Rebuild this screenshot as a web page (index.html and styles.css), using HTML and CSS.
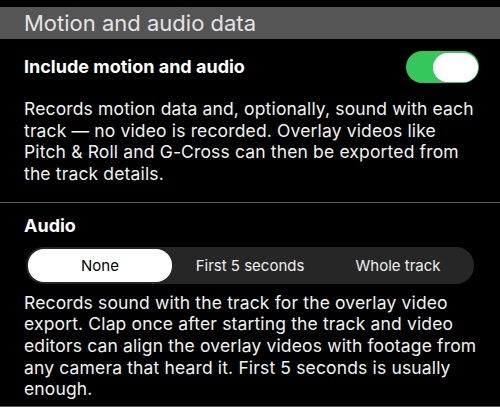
FILE: index.html
```html
<!DOCTYPE html>
<html lang="en">
<head>
<meta charset="utf-8">
<link rel="stylesheet" href="styles.css">
</head>
<body>
<div class="screen">
  <div class="section-header">Motion and audio data</div>
  <div class="group">
    <div class="row">
      <span class="row-title">Include motion and audio</span>
      <span class="toggle"><span class="knob"></span></span>
    </div>
    <p class="desc">Records motion data and, optionally, sound with each<br>track — no video is recorded. Overlay videos like<br>Pitch &amp; Roll and G-Cross can then be exported from<br>the track details.</p>
  </div>
  <div class="group audio">
    <div class="row-title">Audio</div>
    <div class="segmented">
      <span class="seg selected">None</span>
      <span class="seg">First 5 seconds</span>
      <span class="seg">Whole track</span>
    </div>
    <p class="desc">Records sound with the track for the overlay video<br>export. Clap once after starting the track and video<br>editors can align the overlay videos with footage from<br>any camera that heard it. First 5 seconds is usually<br>enough.</p>
  </div>
</div>
</body>
</html>
```
FILE: styles.css
```css
html, body {
  margin: 0;
  padding: 0;
  background: #000;
}
body {
  font-family: Inter, "Noto Sans", sans-serif;
  color: #fff;
  width: 500px;
  height: 407px;
  overflow: hidden;
}
.screen {
  padding-top: 7px;
}
.section-header {
  height: 32px;
  line-height: 32px;
  background: #555555;
  color: #e4e4e4;
  font-size: 22px;
  padding-left: 24px;
  box-sizing: border-box;
}
.group {
  border-bottom: 1px solid #5a5a5a;
}
.row {
  display: flex;
  align-items: center;
  justify-content: space-between;
  padding: 12px 21px 0 24px;
}
.row-title {
  font-size: 18px;
  font-weight: 700;
  line-height: 22px;
}
.toggle {
  width: 73px;
  height: 32px;
  border-radius: 16px;
  background: #34c759;
  display: flex;
  align-items: center;
  justify-content: flex-end;
  padding-right: 1px;
  box-sizing: border-box;
}
.knob {
  width: 45px;
  height: 29px;
  border-radius: 15px;
  background: #fff;
}
.desc {
  margin: 0;
  font-size: 17.5px;
  line-height: 21.6px;
  letter-spacing: 0.15px;
  padding: 15px 14px 18px 24px;
  color: #f2f2f2;
}
.audio {
  padding-top: 12px;
}
.audio > .row-title {
  padding-left: 24px;
}
.audio .desc {
  padding-top: 7.5px;
  padding-bottom: 6.5px;
}
.segmented {
  margin: 10px 26px 0 26px;
  height: 37px;
  background: #262626;
  border-radius: 18px;
  padding: 2px;
  box-sizing: border-box;
  display: grid;
  grid-template-columns: 1fr 1fr 1fr;
}
.seg {
  display: flex;
  align-items: center;
  justify-content: center;
  font-size: 15px;
  color: #f0f0f0;
  border-radius: 16px;
}
.seg.selected {
  background: #fff;
  color: #000;
  margin-right: 4px;
}
```
